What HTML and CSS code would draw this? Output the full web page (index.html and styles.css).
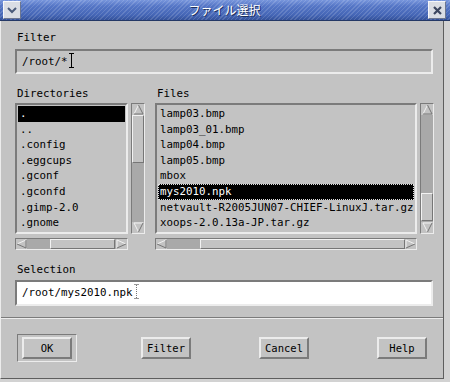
FILE: index.html
```html
<!DOCTYPE html>
<html>
  <head>
    <meta charset="utf-8">
    <title>ファイル選択</title>
    <link rel="stylesheet" href="styles.css">
  </head>
  <body>
    <div class="window">
      <div class="titlebar">
        <span class="tbtn menu">
          <svg width="18" height="18" viewBox="0 0 18 18"><polyline points="5,7 9,11 13,7" fill="none" stroke="#4a5a7a" stroke-width="2"/></svg>
        </span>
        <span class="title">ファイル選択</span>
        <span class="tbtn close">
          <svg width="17" height="17" viewBox="0 0 17 17"><path d="M5 5 L12 12 M12 5 L5 12" stroke="#3c4660" stroke-width="2.2"/></svg>
        </span>
      </div>

      <div class="dialog">
        <div class="work">
          <div class="lbl">Filter</div>
          <div class="field">/root/*<span class="caret"></span></div>

          <div class="lists">
            <div class="col dircol">
              <div class="lbl">Directories</div>
              <div class="listwrap">
                <div class="list">
                  <div class="row sel">.</div>
                  <div class="row">..</div>
                  <div class="row">.config</div>
                  <div class="row">.eggcups</div>
                  <div class="row">.gconf</div>
                  <div class="row">.gconfd</div>
                  <div class="row">.gimp-2.0</div>
                  <div class="row">.gnome</div>
                </div>
                <div class="vscroll">
                  <span class="arrow up"><svg width="11" height="11" viewBox="0 0 11 11"><polygon points="5.5,1 10,10 1,10" fill="#c3c3c3"/><path d="M1 10 L5.5 1" stroke="#f2f2f2"/><path d="M5.5 1 L10 10 L1 10" fill="none" stroke="#767676"/></svg></span>
                  <div class="track"><div class="thumb" style="margin-top:0;height:48px"></div></div>
                  <span class="arrow down"><svg width="11" height="11" viewBox="0 0 11 11"><polygon points="1,1 10,1 5.5,10" fill="#c3c3c3"/><path d="M1 1 L10 1 M1 1 L5.5 10" fill="none" stroke="#f2f2f2"/><path d="M10 1 L5.5 10" stroke="#767676"/></svg></span>
                </div>
              </div>
              <div class="hscroll">
                <span class="arrow left"><svg width="11" height="10" viewBox="0 0 11 10"><polygon points="1,5 10,1 10,9" fill="#c3c3c3"/><path d="M1 5 L10 1" stroke="#f2f2f2"/><path d="M10 1 L10 9 L1 5" fill="none" stroke="#767676"/></svg></span>
                <div class="track"><div class="thumb" style="margin-left:23px;width:65px"></div></div>
                <span class="arrow right"><svg width="11" height="10" viewBox="0 0 11 10"><polygon points="1,1 10,5 1,9" fill="#c3c3c3"/><path d="M1 9 L1 1 L10 5" fill="none" stroke="#f2f2f2"/><path d="M10 5 L1 9" stroke="#767676"/></svg></span>
              </div>
            </div>

            <div class="col filecol">
              <div class="lbl">Files</div>
              <div class="listwrap">
                <div class="list">
                  <div class="row">lamp03.bmp</div>
                  <div class="row">lamp03_01.bmp</div>
                  <div class="row">lamp04.bmp</div>
                  <div class="row">lamp05.bmp</div>
                  <div class="row">mbox</div>
                  <div class="row sel focus">mys2010.npk</div>
                  <div class="row">netvault-R2005JUN07-CHIEF-LinuxJ.tar.gz</div>
                  <div class="row">xoops-2.0.13a-JP.tar.gz</div>
                </div>
                <div class="vscroll">
                  <span class="arrow up"><svg width="11" height="11" viewBox="0 0 11 11"><polygon points="5.5,1 10,10 1,10" fill="#c3c3c3"/><path d="M1 10 L5.5 1" stroke="#f2f2f2"/><path d="M5.5 1 L10 10 L1 10" fill="none" stroke="#767676"/></svg></span>
                  <div class="track"><div class="thumb" style="margin-top:78px;height:28px"></div></div>
                  <span class="arrow down"><svg width="11" height="11" viewBox="0 0 11 11"><polygon points="1,1 10,1 5.5,10" fill="#c3c3c3"/><path d="M1 1 L10 1 M1 1 L5.5 10" fill="none" stroke="#f2f2f2"/><path d="M10 1 L5.5 10" stroke="#767676"/></svg></span>
                </div>
              </div>
              <div class="hscroll">
                <span class="arrow left"><svg width="11" height="10" viewBox="0 0 11 10"><polygon points="1,5 10,1 10,9" fill="#c3c3c3"/><path d="M1 5 L10 1" stroke="#f2f2f2"/><path d="M10 1 L10 9 L1 5" fill="none" stroke="#767676"/></svg></span>
                <div class="track"><div class="thumb" style="margin-left:33px;width:205px"></div></div>
                <span class="arrow right"><svg width="11" height="10" viewBox="0 0 11 10"><polygon points="1,1 10,5 1,9" fill="#c3c3c3"/><path d="M1 9 L1 1 L10 5" fill="none" stroke="#f2f2f2"/><path d="M10 5 L1 9" stroke="#767676"/></svg></span>
              </div>
            </div>
          </div>

          <div class="lbl gap-top">Selection</div>
          <div class="field white">/root/mys2010.npk<span class="caret dim"></span></div>
        </div>

        <div class="sep"></div>

        <div class="buttons">
          <div class="default"><span class="btn">OK</span></div>
          <span class="btn b-filter">Filter</span>
          <span class="btn b-cancel">Cancel</span>
          <span class="btn b-help">Help</span>
        </div>
      </div>
    </div>
  </body>
</html>
```

FILE: styles.css
```css
body {
  margin:      0;
  background:  #d2d2d2;
  color:       #000;
  font-family: "DejaVu Sans Mono", "Liberation Mono", monospace;
  font-size:   10.8px;
}
.window {
  width:          450px;
  height:         382px;
  display:        flex;
  flex-direction: column;
  background:     #d2d2d2;
  overflow:       hidden;
}

/* title bar */
.titlebar {
  height:        20px;
  flex:          none;
  display:       flex;
  align-items:   center;
  padding:       0 4px 0 3px;
  border-bottom: 1px solid #243866;
  background:
    repeating-linear-gradient(135deg, rgba(255,255,255,.14) 0 1px, transparent 1px 3px),
    linear-gradient(#7896dc, #5576c6 30%, #4566b6 75%, #33519a);
}
.title {
  flex:        1;
  text-align:  center;
  color:       #fff;
  font-family: "Noto Sans CJK JP", sans-serif;
  font-size:   12px;
  line-height: 20px;
  text-shadow: 1px 1px 0 #1e2f5c;
}
.tbtn {
  display:      flex;
  width:        18px;
  height:       18px;
  box-sizing:   border-box;
  background:   #dadde4;
  border:       1px solid;
  border-color: #f6f7fa #6c7690 #6c7690 #f6f7fa;
  align-items:  center;
  justify-content: center;
}
.tbtn svg {
  flex: none;
}

/* dialog body */
.dialog {
  flex:           1;
  display:        flex;
  flex-direction: column;
  margin:         0 6px 3px 0;
  background:     #c3c3c3;
  border-left:    1px solid #ececec;
  border-right:   1px solid #5e5e5e;
  border-bottom:  1px solid #5e5e5e;
}
.work {
  padding: 9px 10px 0 14px;
}
.lbl {
  height:       16px;
  line-height:  16px;
  padding-left: 2px;
}
.gap-top {
  margin-top: 12px;
}
.field {
  margin-top:   3px;
  height:       25px;
  box-sizing:   border-box;
  border:       2px solid;
  border-color: #7b7b7b #ececec #ececec #7b7b7b;
  padding-left: 5px;
  line-height:  21px;
  white-space:  nowrap;
}
.field.white {
  margin-top: 2px;
  height:     26px;
  line-height: 22px;
  background: #fff;
}
.caret {
  display:        inline-block;
  width:          5px;
  height:         13px;
  margin-left:    1px;
  vertical-align: -3px;
  border-top:     1px solid #000;
  border-bottom:  1px solid #000;
  background:     linear-gradient(90deg, transparent 2px, #000 2px 3px, transparent 3px);
}
.caret.dim {
  border-color: #999;
  background:   repeating-linear-gradient(#777 0 1px, transparent 1px 2px) 2px 0 / 1px 100% no-repeat;
}

/* lists */
.lists {
  display:    flex;
  gap:        10px;
  margin-top: 12px;
}
.dircol {
  width: 130px;
  flex:  none;
}
.filecol {
  flex: 1;
}
.listwrap {
  display:    flex;
  gap:        3px;
  margin-top: 1px;
  height:     131px;
}
.list {
  flex:         1;
  min-width:    0;
  overflow:     hidden;
  box-sizing:   border-box;
  border:       2px solid;
  border-color: #7b7b7b #ececec #ececec #7b7b7b;
  padding:      1px;
}
.row {
  height:       15.6px;
  line-height:  15.6px;
  padding-left: 2px;
  white-space:  nowrap;
}
.row.sel {
  background: #000;
  color:      #fff;
}
.row.focus {
  outline:        1px dotted #ddd;
  outline-offset: -1px;
}

/* scrollbars */
.vscroll, .hscroll {
  display:      flex;
  box-sizing:   border-box;
  border:       1px solid;
  border-color: #7b7b7b #ececec #ececec #7b7b7b;
  background:   #a9a9a9;
}
.vscroll {
  width:          14px;
  flex:           none;
  flex-direction: column;
}
.hscroll {
  height:       12px;
  margin-top:   4px;
  margin-right: 17px;
}
.arrow {
  display:    flex;
  flex:       none;
  background: #c3c3c3;
}
.vscroll .arrow {
  height: 11px;
  justify-content: center;
}
.hscroll .arrow {
  width: 11px;
  align-items: center;
}
.track {
  flex:    1;
  display: flex;
}
.vscroll .track {
  flex-direction: column;
}
.thumb {
  flex:         none;
  box-sizing:   border-box;
  background:   #c3c3c3;
  border:       1px solid;
  border-color: #f2f2f2 #767676 #767676 #f2f2f2;
}

/* separator and buttons */
.sep {
  margin-top:    11px;
  border-top:    1px solid #7b7b7b;
  border-bottom: 1px solid #ececec;
}
.buttons {
  flex:         1;
  display:      flex;
  align-items:  center;
  padding:      0 0 2px 16px;
}
.default {
  display:      flex;
  width:        60px;
  height:       28px;
  box-sizing:   border-box;
  border:       1px solid;
  border-color: #7b7b7b #ececec #ececec #7b7b7b;
  align-items:  center;
  justify-content: center;
}
.btn {
  display:      inline-block;
  width:        50px;
  height:       22px;
  box-sizing:   border-box;
  border:       2px solid;
  border-color: #ececec #7b7b7b #7b7b7b #ececec;
  text-align:   center;
  line-height:  18px;
  font-size:    10.5px;
}
.b-filter {
  margin-left: 64px;
}
.b-cancel,
.b-help {
  margin-left: 68px;
}
```
